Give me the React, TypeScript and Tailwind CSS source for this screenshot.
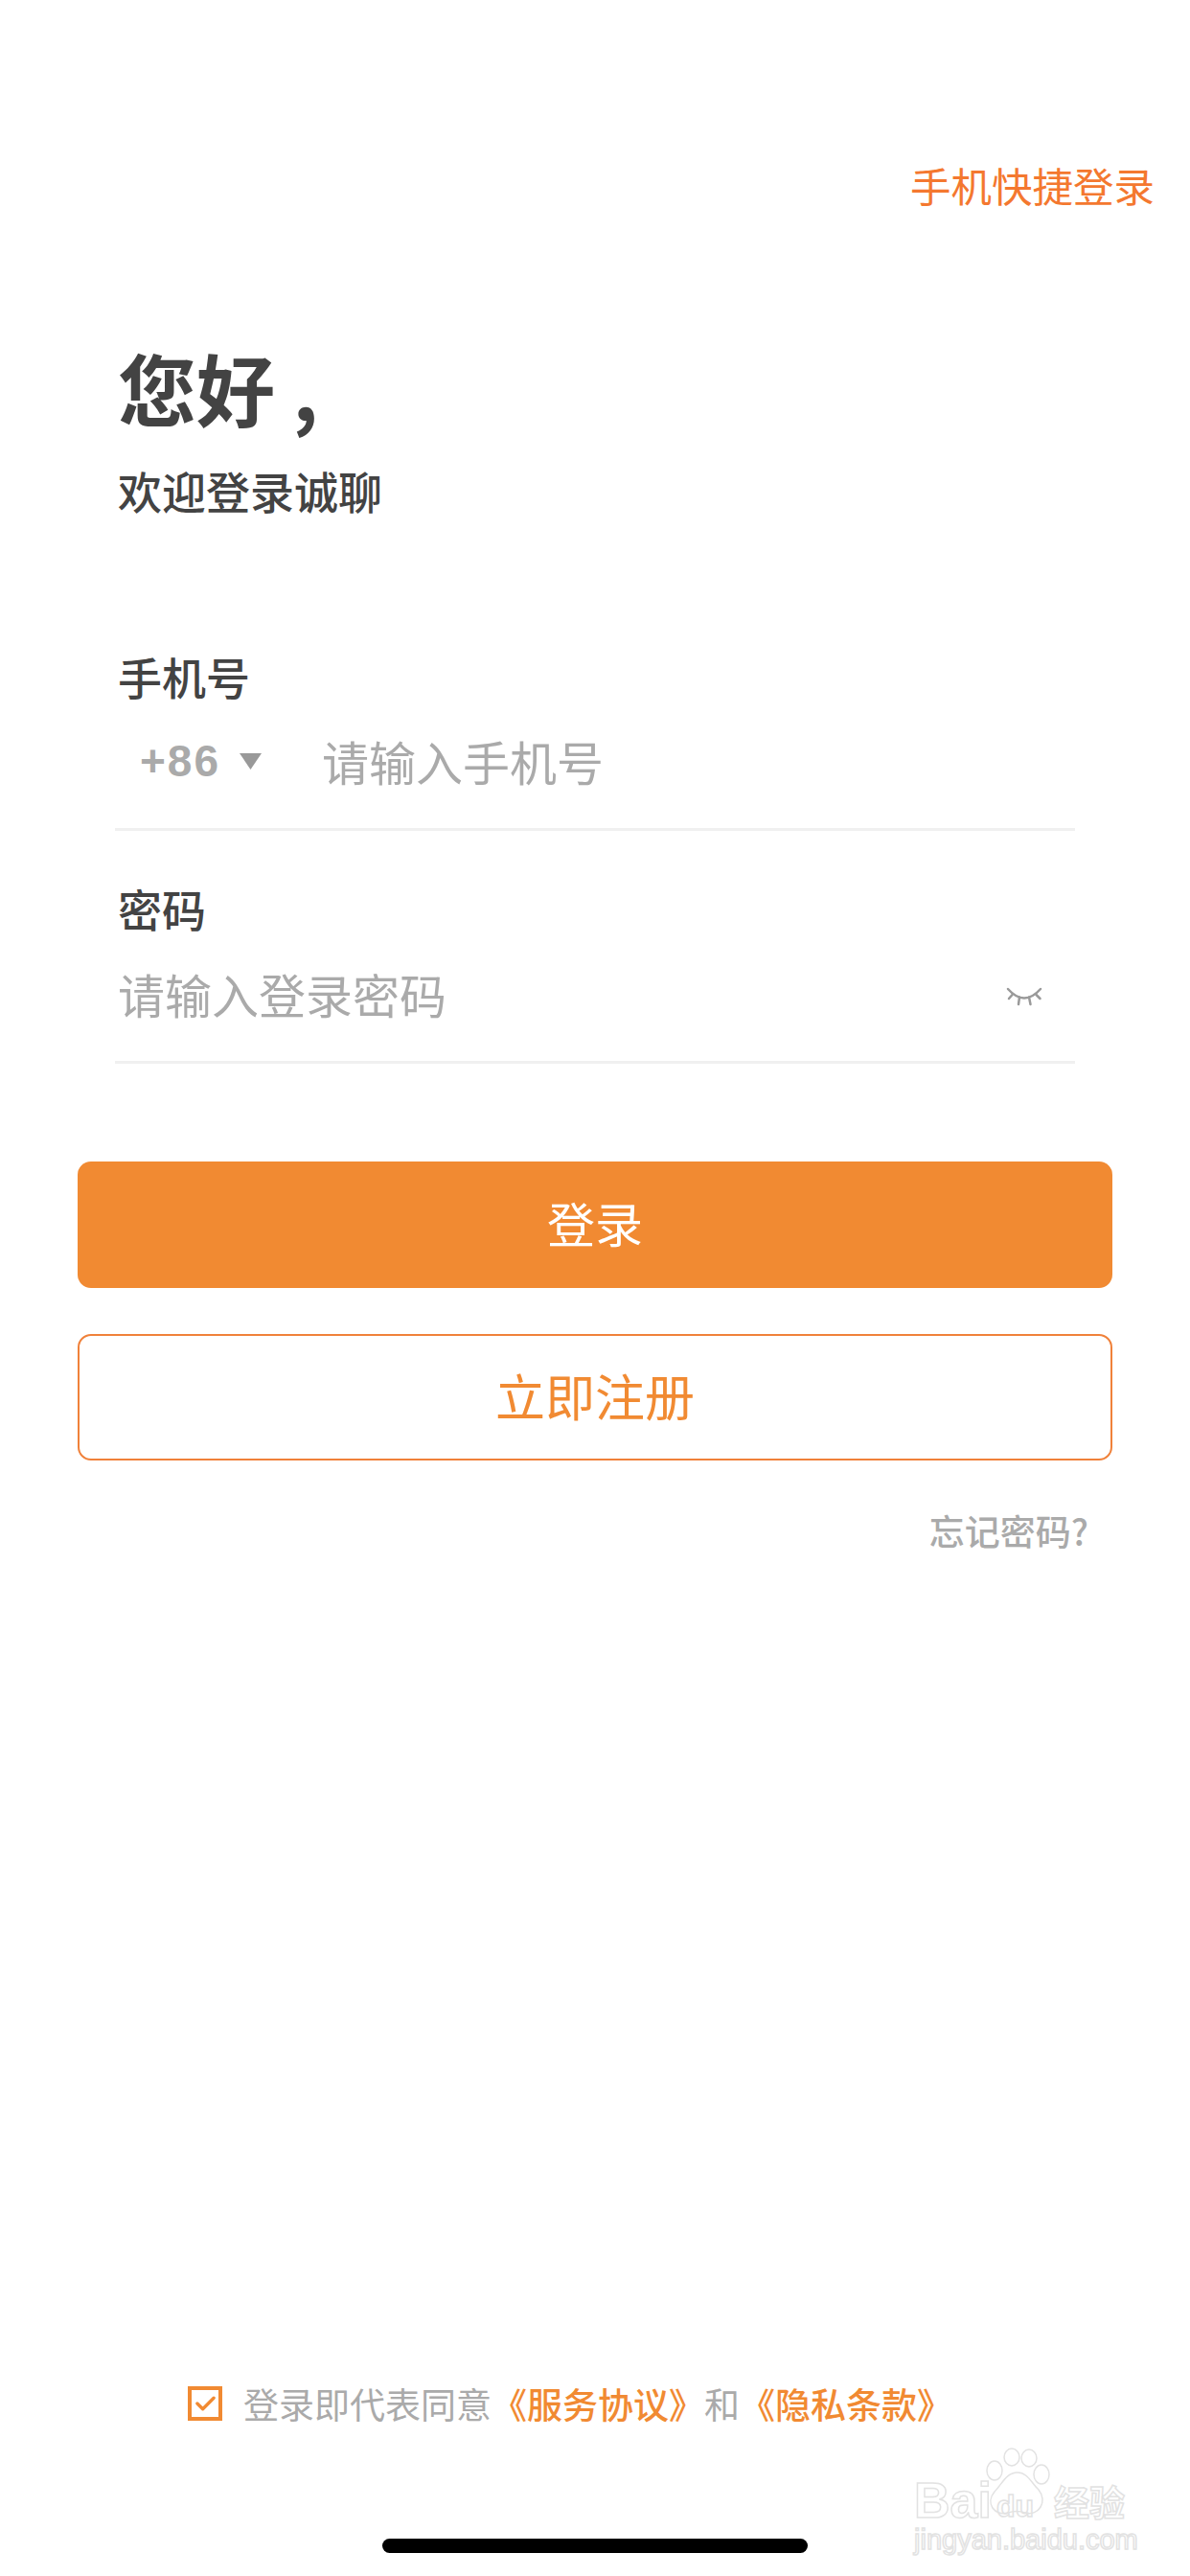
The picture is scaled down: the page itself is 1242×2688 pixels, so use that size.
function EyeClosed() {
  return (
    <svg className="mt-[6px]" width="38" height="22" viewBox="30 20 38 22" fill="none" stroke="#9a9a9a" strokeWidth="2.500" strokeLinecap="round">
      <path d="M32 23 Q49 42 66 23" />
      <path d="M36.5 29 L33 33 M44 31.5 L43 39 M54 31.5 L55.500 39 M61.500 29 L65.500 33" />
    </svg>
  )
}

function Watermark() {
  return (
    <div className="absolute left-[952px] top-[2554px] h-[112px] w-[230px] font-['Liberation_Sans','Noto_Sans_CJK_SC',sans-serif] text-transparent [-webkit-text-stroke:1.5px_#e2e2e2]">
      {/* paw */}
      <svg className="absolute left-[74px] top-0" width="76" height="76" viewBox="0 0 76 76" fill="#fff" stroke="#e2e2e2" strokeWidth="1.500">
        <ellipse cx="12" cy="24" rx="8" ry="10" />
        <ellipse cx="30" cy="10" rx="8" ry="9" />
        <ellipse cx="48" cy="11" rx="8" ry="9" />
        <ellipse cx="61" cy="28" rx="8" ry="10" />
        <path d="M36 26 C46 26 50 36 58 44 C68 56 58 72 44 68 C38 66 32 66 26 68 C12 72 2 58 12 46 C20 38 24 26 36 26 Z" />
      </svg>
      <span className="absolute left-[2px] top-[30px] text-[52px] leading-[50px] font-bold">Bai</span>
      <span className="absolute left-[88px] top-[44px] text-[32px] leading-[34px] font-bold">du</span>
      <span className="absolute left-[148px] top-[36px] font-['Noto_Sans_CJK_SC',sans-serif] text-[37px] leading-[40px] font-bold">经验</span>
      <span className="absolute left-[2px] top-[80px] text-[29px] leading-[32px] whitespace-nowrap">jingyan.baidu.com</span>
    </div>
  )
}

export default function App() {
  return (
    <div className="relative flex h-[2688px] w-[1242px] flex-col overflow-hidden bg-white font-['Noto_Sans_CJK_SC','Liberation_Sans',sans-serif]">
      {/* top link */}
      <div className="flex justify-end pt-[163px] pr-[37px] text-[42.5px] leading-[60px] text-[#f4782f]">手机快捷登录</div>

      {/* greeting */}
      <div className="mt-[136px] pl-[123px] text-[#434343]">
        <div className="text-[82px] leading-[90px] font-bold">您好 ,</div>
        <div className="mt-[32px] text-[46px] leading-[60px] font-medium">欢迎登录诚聊</div>
      </div>

      {/* form */}
      <div className="mt-[134px] px-[120px]">
        <div className="pl-[3px] text-[46px] leading-[60px] font-medium text-[#434343]">手机号</div>
        <div className="flex h-[118px] items-center text-[#aaaaaa]">
          <span className="ml-[26px] w-[84px] font-['Liberation_Sans',sans-serif] text-[46px] font-bold tracking-[2px] whitespace-nowrap">+86</span>
          <svg className="ml-[20px]" width="23" height="17" viewBox="0 0 23 17" fill="#999999">
            <polygon points="0,0 23,0 11.500,17" />
          </svg>
          <span className="ml-[63px] text-[49px]">请输入手机号</span>
        </div>
        <div className="mt-[11px] h-[3px] bg-[#f0f0f0]" />

        <div className="mt-[50px] pl-[3px] text-[46px] leading-[60px] font-medium text-[#434343]">密码</div>
        <div className="flex h-[120px] items-center justify-between pr-[34px] pl-[3px] text-[#aaaaaa]">
          <span className="text-[49px]">请输入登录密码</span>
          <EyeClosed />
        </div>
        <div className="mt-[10px] h-[3px] bg-[#f0f0f0]" />
      </div>

      {/* buttons */}
      <div className="mt-[102px] flex flex-col gap-[48px] px-[81px]">
        <button className="h-[132px] rounded-[14px] bg-[#f18a32] pb-[5px] text-[50px] text-white">登录</button>
        <button className="h-[132px] rounded-[14px] border-2 border-[#f0813a] bg-white pb-[5px] text-[52px] text-[#f18a32]">立即注册</button>
      </div>

      <div className="mt-[48px] flex justify-end pr-[106px] text-[37px] leading-[50px] font-medium text-[#aaaaaa]">忘记密码?</div>

      {/* agreement */}
      <div className="mt-auto flex items-center pl-[196px] text-[37px] leading-[50px] text-[#aaaaaa]">
        <div className="flex h-[36px] w-[36px] items-center justify-center border-4 border-[#f18a32]">
          <svg width="21" height="16" viewBox="0 0 22 16" fill="none" stroke="#f18a32" strokeWidth="3.500" strokeLinecap="round" strokeLinejoin="round">
            <path d="M2 8 L8 14 L20 2" />
          </svg>
        </div>
        <span className="ml-[22px]">登录即代表同意</span>
        <span className="font-medium text-[#f18a32]">《服务协议》</span>
        <span>和</span>
        <span className="font-medium text-[#f18a32]">《隐私条款》</span>
      </div>

      {/* home indicator */}
      <div className="mt-[116px] mb-[24px] flex justify-center">
        <div className="h-[15px] w-[444px] rounded-full bg-black" />
      </div>

      <Watermark />
    </div>
  )
}
